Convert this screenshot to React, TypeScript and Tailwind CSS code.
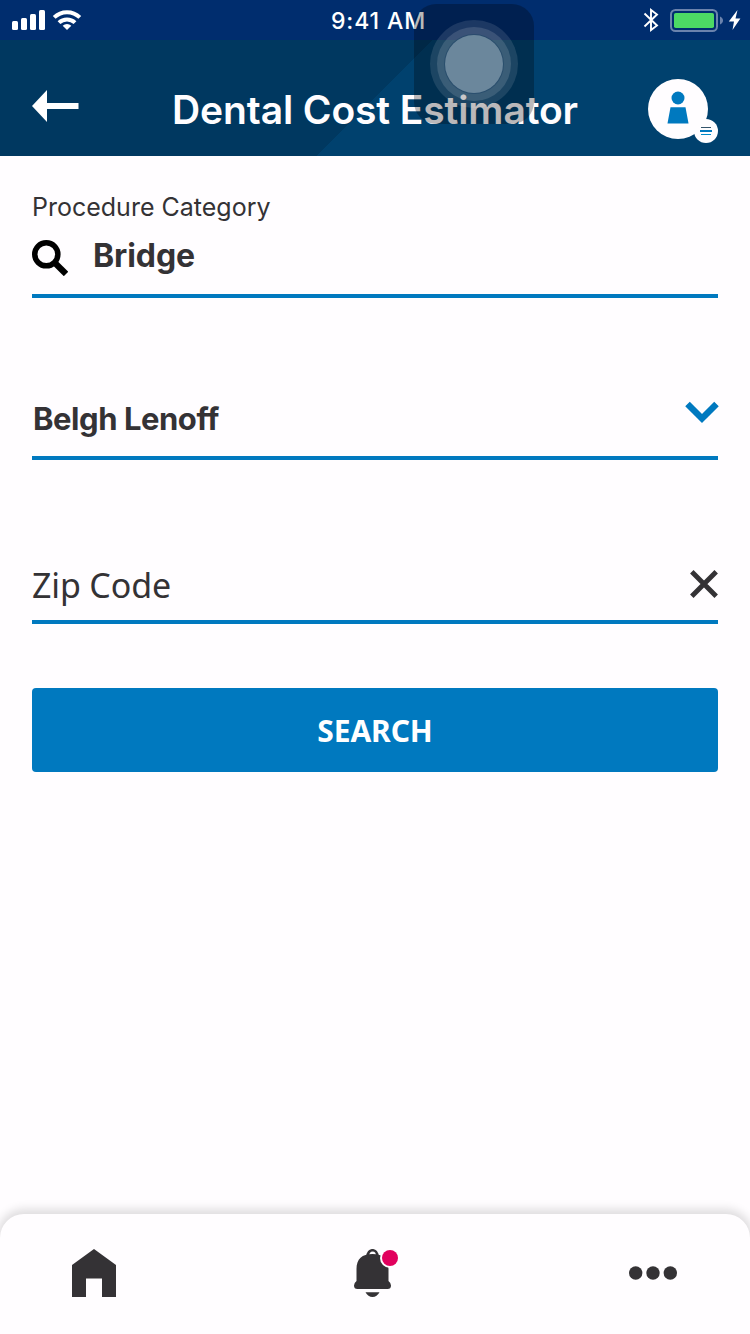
import React from "react";

function StatusBar() {
  return (
    <div className="flex h-10 items-center justify-between bg-[#002d6e] text-white">
      <svg className="h-10 w-[120px]" viewBox="0 0 120 40" fill="#fff">
        <rect x="12" y="21" width="6" height="9" rx="1.5" />
        <rect x="21" y="18" width="6" height="12" rx="1.5" />
        <rect x="30" y="14" width="6" height="16" rx="1.5" />
        <rect x="39" y="10" width="6" height="20" rx="1.5" />
        <g fill="none" stroke="#fff" strokeWidth="4">
          <path d="M54.2 17.4a18.2 18.2 0 0 1 25.6 0" />
          <path d="M59 22.6a11.6 11.6 0 0 1 16 0" />
        </g>
        <path d="M67 30l-4.3-4.2a6.3 6.3 0 0 1 8.6 0z" />
      </svg>
      <span className="pl-[7px] pt-0.5 font-['Inter',sans-serif] text-[23px] font-medium leading-[38px] tracking-[0.9px]">
        9:41 AM
      </span>
      <svg className="h-10 w-[120px]" viewBox="0 0 120 40">
        <path d="M14.5 13.5L27 25.500L21 30V10L27 14.500L14.500 26.500" fill="none" stroke="#fff" strokeWidth="1.9" />
        <rect x="41" y="10" width="46" height="21" rx="4.500" fill="none" stroke="#6b83ad" strokeWidth="2" />
        <rect x="44" y="13" width="40" height="15" rx="1.800" fill="#4cd964" />
        <path d="M90 16.500c4 1.500 4 6.500 0 8z" fill="#6b83ad" />
        <path d="M107.500 10L98.800 21.500H104L102.500 30L110.400 18.500H105.500z" fill="#fff" />
      </svg>
    </div>
  );
}

function Header() {
  return (
    <header className="relative h-[156px] shrink-0">
      <StatusBar />
      <div className="flex h-[116px] bg-[linear-gradient(135deg,#003860_0_306px,#00416e_306px)] px-8">
        <div className="flex w-full items-start justify-between">
          <svg className="mt-[50px] h-8 w-[47px]" viewBox="0 0 47 32" fill="#fff">
            <path d="M0 16L15 0V13H46.500V19H15V32z" />
          </svg>
          <h1 className="mt-[45px] whitespace-nowrap pl-[23px] font-['Inter',sans-serif] text-[39px] font-semibold leading-[50px] tracking-[-0.1px] text-[#fffdff]">
            Dental Cost Estimator
          </h1>
          <svg className="mt-[39px] h-[64px] w-[70px]" viewBox="0 0 70 64">
            <circle cx="30" cy="30" r="30" fill="#fffdff" />
            <circle cx="30" cy="19" r="6.500" fill="#0079bf" />
            <path d="M22.500 28.300H37.500L40.500 44.500H19.500z" fill="#0079bf" />
            <circle cx="58" cy="52" r="12" fill="#fffdff" />
            <path d="M53 48.500H63" stroke="#35546b" strokeWidth="1" />
            <path d="M52 52H64" stroke="#0079bf" strokeWidth="2" />
            <path d="M53 55.500H63" stroke="#0089c8" strokeWidth="1" />
          </svg>
        </div>
      </div>
      <div className="absolute left-[414px] top-1 flex size-[120px] items-center justify-center rounded-[22px] bg-black/[0.27]">
        <div className="flex size-[88px] items-center justify-center rounded-full bg-white/[0.11]">
          <div className="flex size-[74px] items-center justify-center rounded-full bg-white/[0.13]">
            <div className="flex size-[60px] items-center justify-center rounded-full bg-[#23496a]/70">
              <div className="size-[58px] rounded-full bg-[#6b879c]" />
            </div>
          </div>
        </div>
      </div>
    </header>
  );
}

function SearchForm() {
  return (
    <main className="flex-1 px-8 pt-8 text-[#343235]">
      <div className="flex h-[110px] flex-col border-b-4 border-[#0079bf]">
        <span className="mt-1 font-['Inter',sans-serif] text-[25px] leading-[30px]">Procedure Category</span>
        <div className="flex items-start">
          <svg className="mt-[18px] h-9 w-9" viewBox="0 0 36 36" fill="none" stroke="#000" strokeWidth="5.5">
            <circle cx="14.300" cy="14.300" r="11.550" />
            <path d="M22.500 22.500L34 34" strokeWidth="6.200" />
          </svg>
          <span className="ml-[25px] mt-[12px] font-['Inter',sans-serif] text-[32px] font-bold leading-[44px] tracking-[-0.1px]">Bridge</span>
        </div>
      </div>

      <div className="mt-[82px] flex h-20 items-start justify-between border-b-4 border-[#0079bf]">
        <span className="ml-px mt-[17px] font-['Inter',sans-serif] text-[31px] font-bold leading-[44px] tracking-[-0.45px]">Belgh Lenoff</span>
        <svg className="mt-[20px] -mr-px h-[24px] w-[34px]" viewBox="0 0 34 24" fill="none" stroke="#0079bf" strokeWidth="6.400">
          <path d="M2.500 4L17 18.500L31.500 4" />
        </svg>
      </div>

      <div className="mt-[84px] flex h-20 items-start justify-between border-b-4 border-[#0079bf]">
        <span className="mt-[19px] font-['Noto_Sans',sans-serif] text-[34px] leading-[44px] tracking-[-0.15px]">Zip Code</span>
        <svg className="mt-[26px] h-7 w-7" viewBox="0 0 28 28" fill="none" stroke="#343235" strokeWidth="4.900">
          <path d="M1.800 1.800L26.200 26.200M26.200 1.800L1.800 26.200" />
        </svg>
      </div>

      <button className="mt-16 flex h-[84px] w-full items-center justify-center rounded bg-[#0079bf] font-['Noto_Sans',sans-serif] text-[30px] font-bold tracking-[-0.1px] text-white">
        SEARCH
      </button>
    </main>
  );
}

function TabBar() {
  return (
    <nav className="flex h-[120px] items-start justify-between rounded-t-[24px] bg-[#fffdff] pl-[72px] pr-[73px] pt-[35px] shadow-[0_-2px_10px_3px_rgba(0,0,0,0.13)]">
      <svg className="h-12 w-11" viewBox="0 0 44 48" fill="#343235">
        <path d="M0 16L22 0L44 16V48H30V29.500H14V48H0z" />
      </svg>
      <svg className="ml-2 h-12 w-[46px]" viewBox="0 0 46 48">
        <path d="M13.500 8C13.500 -1 23.500 -1 23.500 8" fill="none" stroke="#343235" strokeWidth="2.600" />
        <path d="M2.500 20C2.500 10 8 5 18.500 5C29 5 34.500 10 34.500 20V32Q37 34 37 36.500Q37 40 33.500 40H3.500Q0 40 0 36.500Q0 34 2.500 32z" fill="#343235" />
        <path d="M11.500 43.300H25.500Q23 48 18.500 48T11.500 43.300z" fill="#343235" />
        <circle cx="36" cy="9" r="10" fill="#fffdff" />
        <circle cx="36" cy="9" r="8" fill="#e1005d" />
      </svg>
      <svg className="h-12 w-12" viewBox="0 0 48 48" fill="#343235">
        <circle cx="6.700" cy="24" r="6.700" />
        <circle cx="24" cy="24" r="6.700" />
        <circle cx="41.300" cy="24" r="6.700" />
      </svg>
    </nav>
  );
}

export default function App() {
  return (
    <div className="flex h-[1334px] w-[750px] flex-col overflow-hidden bg-[#fffdff]">
      <Header />
      <SearchForm />
      <TabBar />
    </div>
  );
}
